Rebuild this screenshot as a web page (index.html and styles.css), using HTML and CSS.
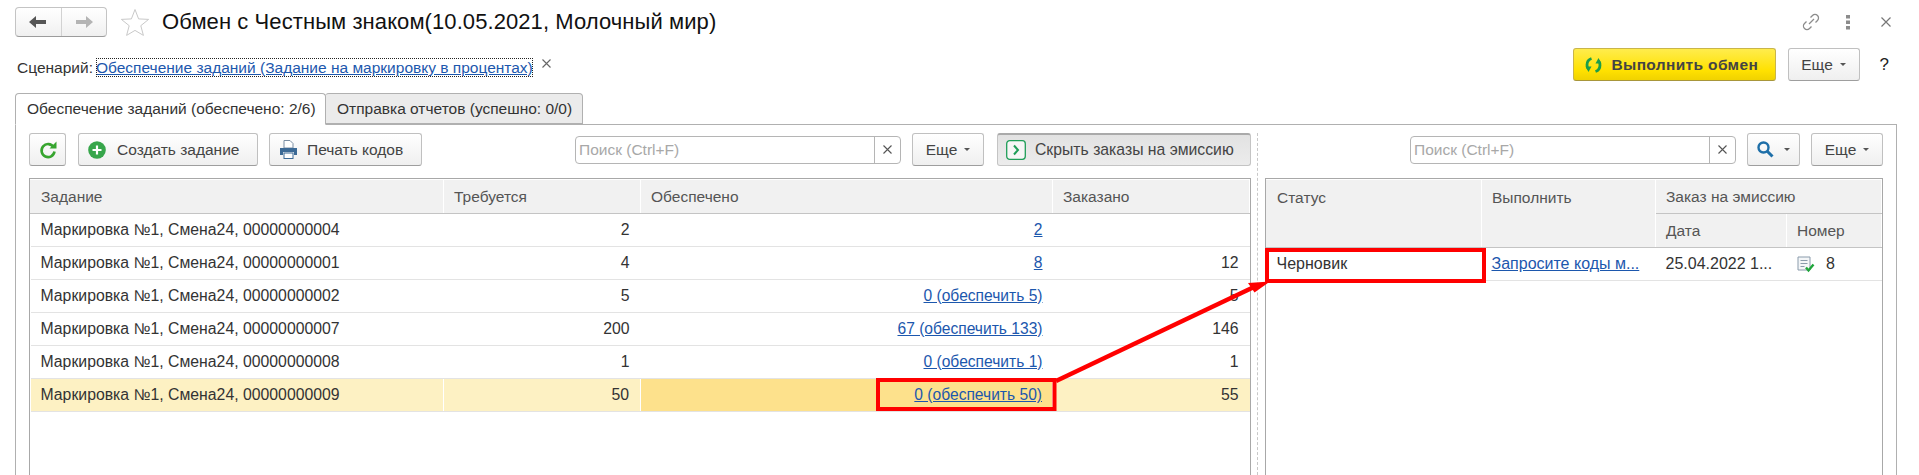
FILE: index.html
```html
<!DOCTYPE html>
<html lang="ru">

<head>
	<meta charset="UTF-8">
	<title>Обмен с Честным знаком</title>
	<link rel="stylesheet" href="styles.css">
</head>

<body>
	<div class="page">
		<div class="titlebar">
			<div class="nav">
				<span class="nav_item">
					<svg width="18" height="14" viewBox="0 0 18 14"><path d="M0 7 7 1v4h10v4H7v4z" fill="#555"/></svg>
				</span>
				<span class="nav_item">
					<svg width="18" height="14" viewBox="0 0 18 14"><path d="M18 7 11 1v4H1v4h10v4z" fill="#b4b4b4"/></svg>
				</span>
			</div>
			<svg class="star" width="30" height="28" viewBox="0 0 30 28"><path d="M15 1.5l3.6 9.4 10 .5-7.800 6.300 2.600 9.700L15 22.400l-8.400 5 2.600-9.700-7.800-6.300 10-.5z" fill="#fff" stroke="#c9c9c9"/></svg>
			<h1 class="title">Обмен с Честным знаком(10.05.2021, Молочный мир)</h1>
			<div class="window_icons">
				<svg class="icon_link" width="20" height="20" viewBox="0 0 20 20" fill="none" stroke="#8c8c8c" stroke-width="1.300"><path d="M8 12l5-5"/><path d="M9.500 5.500l2-2a3.500 3.500 0 0 1 5 5l-2 2"/><path d="M10.500 14.500l-2 2a3.500 3.500 0 0 1-5-5l2-2"/></svg>
				<svg width="6" height="16" viewBox="0 0 6 16" fill="#8c8c8c"><rect x="1" y="1" width="4" height="3.500"/><rect x="1" y="6.500" width="4" height="3.500"/><rect x="1" y="12" width="4" height="3.500"/></svg>
				<svg width="10" height="10" viewBox="0 0 10 10" stroke="#777" stroke-width="1.200"><path d="M.5.5l9 9M9.500.5l-9 9"/></svg>
			</div>
		</div>

		<div class="scenario">
			<span class="scenario_label">Сценарий:</span>
			<a class="scenario_link" href="#">Обеспечение заданий (Задание на маркировку в процентах)</a>
			<svg class="scenario_close" width="9" height="9" viewBox="0 0 9 9" stroke="#666" stroke-width="1.100"><path d="M.5.5l8 8M8.500.5l-8 8"/></svg>
			<div class="scenario_actions">
				<button class="btn btn_yellow">
					<svg width="17" height="18" viewBox="0 0 17 18" fill="none" stroke="#1b9e4b" stroke-width="2.800"><path d="M6.500 2.500C3.500 3.500 2 6 2 9c0 1.800.5 3 1.500 4"/><path d="M.5 10.500h6L3.500 16z" fill="#1b9e4b" stroke="none"/><path d="M10.500 15.500c3-1 4.500-3.500 4.500-6.500 0-1.800-.5-3-1.500-4"/><path d="M16.500 7.500h-6L13.500 2z" fill="#1b9e4b" stroke="none"/></svg>
					Выполнить обмен
				</button>
				<button class="btn btn_more">Еще <span class="caret"></span></button>
				<span class="help">?</span>
			</div>
		</div>

		<div class="tabs">
			<div class="tab tab_active">Обеспечение заданий (обеспечено: 2/6)</div>
			<div class="tab tab_second">Отправка отчетов (успешно: 0/0)</div>
		</div>

		<div class="panel">
			<div class="col_left">
				<div class="toolbar">
					<button class="btn btn_icon">
						<svg width="18" height="20" viewBox="0 0 18 20" fill="none"><path d="M14.500 7A6.500 6.500 0 1 0 15.500 11.500" stroke="#37a52f" stroke-width="2.600"/><path d="M10.500 8.500h7V1.500z" fill="#37a52f"/></svg>
					</button>
					<button class="btn btn_create">
						<svg width="18" height="18" viewBox="0 0 18 18"><circle cx="9" cy="9" r="8.800" fill="#37a64b"/><path d="M9 4.500v9M4.500 9h9" stroke="#fff" stroke-width="2.200"/></svg>
						Создать задание
					</button>
					<button class="btn btn_print">
						<svg width="19" height="19" viewBox="0 0 19 19"><path d="M5 .5h6l3 3V8H5z" fill="#fff" stroke="#7b8ea3"/><path d="M1 8h17v7h-3v-3H4v3H1z" fill="#3c6a96"/><rect x="5" y="13" width="9" height="5.500" fill="#fff" stroke="#3c6a96"/></svg>
						Печать кодов
					</button>
					<div class="search">
						<span class="search_hint">Поиск (Ctrl+F)</span>
						<span class="search_clear"><svg width="9" height="9" viewBox="0 0 9 9" stroke="#555" stroke-width="1.100"><path d="M.5.500l8 8M8.500.500l-8 8"/></svg></span>
					</div>
					<button class="btn btn_more">Еще <span class="caret"></span></button>
					<button class="btn btn_pressed">
						<svg width="20" height="20" viewBox="0 0 20 20" fill="none"><rect x=".7" y=".7" width="18.600" height="18.600" rx="3" fill="#f6f6f6" stroke="#1f9e58" stroke-width="1.300"/><path d="M8 5.500l4 4.500-4 4.500" stroke="#1f9e58" stroke-width="2"/></svg>
						Скрыть заказы на эмиссию
					</button>
				</div>

				<div class="grid">
					<table class="grid_table">
						<colgroup>
							<col class="col_task">
							<col class="col_need">
							<col class="col_ready">
							<col class="col_ordered">
						</colgroup>
						<thead>
							<tr>
								<th>Задание</th>
								<th>Требуется</th>
								<th>Обеспечено</th>
								<th>Заказано</th>
							</tr>
						</thead>
						<tbody>
							<tr>
								<td>Маркировка №1, Смена24, 00000000004</td>
								<td class="num">2</td>
								<td class="num"><a href="#">2</a></td>
								<td class="num"></td>
							</tr>
							<tr>
								<td>Маркировка №1, Смена24, 00000000001</td>
								<td class="num">4</td>
								<td class="num"><a href="#">8</a></td>
								<td class="num">12</td>
							</tr>
							<tr>
								<td>Маркировка №1, Смена24, 00000000002</td>
								<td class="num">5</td>
								<td class="num"><a href="#">0 (обеспечить 5)</a></td>
								<td class="num">5</td>
							</tr>
							<tr>
								<td>Маркировка №1, Смена24, 00000000007</td>
								<td class="num">200</td>
								<td class="num"><a href="#">67 (обеспечить 133)</a></td>
								<td class="num">146</td>
							</tr>
							<tr>
								<td>Маркировка №1, Смена24, 00000000008</td>
								<td class="num">1</td>
								<td class="num"><a href="#">0 (обеспечить 1)</a></td>
								<td class="num">1</td>
							</tr>
							<tr class="row_selected">
								<td>Маркировка №1, Смена24, 00000000009</td>
								<td class="num">50</td>
								<td class="num cell_current"><a href="#">0 (обеспечить 50)</a></td>
								<td class="num">55</td>
							</tr>
						</tbody>
					</table>
				</div>
			</div>

			<div class="splitter"></div>

			<div class="col_right">
				<div class="toolbar toolbar_right">
					<div class="search">
						<span class="search_hint">Поиск (Ctrl+F)</span>
						<span class="search_clear"><svg width="9" height="9" viewBox="0 0 9 9" stroke="#555" stroke-width="1.100"><path d="M.5.500l8 8M8.500.500l-8 8"/></svg></span>
					</div>
					<button class="btn btn_find">
						<svg width="17" height="17" viewBox="0 0 17 17" fill="none"><circle cx="6.500" cy="6.500" r="5" stroke="#1e6fa8" stroke-width="2.400"/><path d="M10 10l5.500 5.500" stroke="#1e6fa8" stroke-width="3"/></svg>
						<span class="caret"></span>
					</button>
					<button class="btn btn_more">Еще <span class="caret"></span></button>
				</div>

				<div class="grid">
					<table class="grid_table grid_table_right">
						<colgroup>
							<col class="col_status">
							<col class="col_run">
							<col class="col_date">
							<col class="col_number">
						</colgroup>
						<thead>
							<tr>
								<th rowspan="2" class="th_top">Статус</th>
								<th rowspan="2" class="th_top">Выполнить</th>
								<th colspan="2">Заказ на эмиссию</th>
							</tr>
							<tr>
								<th>Дата</th>
								<th>Номер</th>
							</tr>
						</thead>
						<tbody>
							<tr>
								<td>Черновик</td>
								<td class="cut"><a href="#">Запросите коды м...</a></td>
								<td>25.04.2022 1...</td>
								<td class="cell_doc">
									<svg width="19" height="17" viewBox="0 0 19 17"><path d="M1 1h12v13H1z" fill="#f4f6f8" stroke="#8a9bab"/><path d="M3.500 4.500h7M3.500 7.500h7M3.500 10.500h4" stroke="#8a9bab"/><path d="M9 11.500l2.500 3 5-6" fill="none" stroke="#1fa53a" stroke-width="2.400"/></svg>
									8
								</td>
							</tr>
						</tbody>
					</table>
				</div>
			</div>
		</div>

		<svg class="marks" width="1919" height="475" viewBox="0 0 1919 475" fill="none">
			<rect x="878" y="380" width="176.500" height="29" stroke="#f00" stroke-width="4"/>
			<rect x="1267" y="250" width="217" height="31" stroke="#f00" stroke-width="4"/>
			<path d="M1056 381 1254 287" stroke="#f00" stroke-width="4.500"/>
			<path d="M1270 281.500 1248 283 1254.500 292.500z" fill="#f00"/>
		</svg>
	</div>
</body>

</html>
```

FILE: styles.css
```css
* {
	box-sizing: border-box;
}

body {
	margin: 0;
	background-color: #fff;
	font-family: "Liberation Sans", Arial, sans-serif;
	font-size: 15.5px;
	color: #333;
}

.page {
	position: relative;
	width: 1919px;
	height: 475px;
	overflow: hidden;
	display: flex;
	flex-direction: column;
}

a {
	color: #1c57ad;
}

/* title row */
.titlebar {
	display: flex;
	align-items: center;
	height: 30px;
	margin-top: 7px;
	padding-left: 15px;
}

.nav {
	display: flex;
	width: 92px;
	height: 30px;
	border: 1px solid #c4c4c4;
	border-bottom-color: #9c9c9c;
	border-radius: 4px;
	background: linear-gradient(#fff, #f0f0f0);
}

.nav_item {
	flex: 1;
	display: flex;
	align-items: center;
	justify-content: center;
}

.nav_item + .nav_item {
	border-left: 1px solid #d2d2d2;
}

.star {
	margin-left: 13px;
}

.title {
	margin: 0 0 0 12px;
	font-size: 22px;
	font-weight: normal;
	letter-spacing: .08px;
	color: #111;
}

.window_icons {
	display: flex;
	align-items: center;
	margin-left: auto;
	padding-right: 28px;
	gap: 30px;
}

.icon_link {
	margin-right: -6px;
}

/* scenario row */
.scenario {
	display: flex;
	align-items: center;
	height: 33px;
	margin-top: 11px;
	padding-left: 17px;
}

.scenario_label {
	margin: 6px 3px 0 0;
}

.scenario_link {
	margin-top: 6px;
	padding: 1px 0;
	outline: 1px dotted #222;
	outline-offset: -1px;
	line-height: 17px;
}

.scenario_close {
	margin: -3px 0 0 9px;
}

.scenario_actions {
	display: flex;
	align-items: center;
	margin-left: auto;
	padding-right: 30px;
}

.help {
	margin-left: 20px;
	font-size: 17px;
	color: #222;
}

/* buttons */
.btn {
	display: flex;
	align-items: center;
	justify-content: center;
	height: 33px;
	padding: 0;
	border: 1px solid #c0c0c0;
	border-bottom-color: #9e9e9e;
	border-radius: 3px;
	background: linear-gradient(#fff, #efefef);
	font-family: inherit;
	font-size: 15.5px;
	color: #444;
}

.btn_icon {
	width: 37px;
}

.btn_create {
	width: 180px;
	margin-left: 1px;
	justify-content: flex-start;
	padding-left: 9px;
	gap: 11px;
}

.btn_print {
	width: 153px;
	justify-content: flex-start;
	padding-left: 9px;
	gap: 9px;
}

.btn_more {
	width: 72px;
	gap: 7px;
}

.btn_find {
	width: 53px;
	gap: 10px;
}

.btn_pressed {
	width: 254px;
	justify-content: flex-start;
	padding-left: 8px;
	gap: 9px;
	border-color: #c4c4c4;
	border-top: 2px solid #aaa;
	background: linear-gradient(#e2e2e2, #ececec);
	font-size: 15.750px;
}

.btn_yellow {
	width: 203px;
	justify-content: flex-start;
	padding-left: 11px;
	gap: 10px;
	border-color: #c9b54a;
	border-bottom-color: #a8963a;
	background: linear-gradient(#ffec4d, #ffe100 70%, #f0d200);
	font-size: 15.5px;
	font-weight: bold;
	letter-spacing: .35px;
	color: #444;
}

.scenario_actions .btn_more {
	margin-left: 12px;
}

.caret {
	width: 0;
	height: 0;
	border-left: 3px solid transparent;
	border-right: 3px solid transparent;
	border-top: 3px solid #555;
}

/* tabs */
.tabs {
	display: flex;
	height: 32px;
	margin: 12px 0 -1px 15px;
}

.tab {
	display: flex;
	align-items: center;
	border: 1px solid #b0b0b0;
	border-radius: 4px 4px 0 0;
}

.tab_active {
	position: relative;
	z-index: 1;
	width: 311px;
	padding-left: 11px;
	border-bottom-color: #fff;
	background-color: #fff;
}

.tab_second {
	width: 258px;
	height: 31px;
	margin-left: -1px;
	padding-left: 12px;
	border-left: none;
	background-color: #ebebeb;
}

/* panel with the two lists */
.panel {
	flex: 1;
	display: flex;
	width: 1882px;
	min-height: 0;
	margin-left: 15px;
	padding: 8px 13px 0;
	border: 1px solid #b0b0b0;
	border-bottom: none;
}

.col_left {
	display: flex;
	flex-direction: column;
	width: 1222px;
}

.col_right {
	display: flex;
	flex-direction: column;
	width: 618px;
}

.splitter {
	width: 1px;
	margin: 0 7px 0 6px;
	border-left: 1px dashed #c8c8c8;
}

.toolbar {
	display: flex;
	align-items: center;
	gap: 11px;
	height: 33px;
	margin-bottom: 12px;
}

.toolbar_right {
	justify-content: flex-end;
}

.search {
	display: flex;
	width: 326px;
	height: 28px;
	border: 1px solid #b5b5b5;
	border-radius: 4px;
	background-color: #fff;
}

.col_left .search {
	margin-left: auto;
}

.col_left .btn_pressed {
	margin-left: 2px;
}

.search_hint {
	flex: 1;
	padding-left: 3px;
	line-height: 26px;
	color: #a8a8a8;
}

.search_clear {
	display: flex;
	align-items: center;
	justify-content: center;
	width: 26px;
	border-left: 1px solid #b5b5b5;
}

/* tables */
.grid {
	flex: 1;
	border: 1px solid #a8a8a8;
	border-bottom: none;
}

.grid_table {
	width: 100%;
	border-collapse: collapse;
	table-layout: fixed;
}

.col_task {
	width: 413px;
}

.col_need {
	width: 197px;
}

.col_ready {
	width: 412px;
}

.col_status {
	width: 215px;
}

.col_run {
	width: 174px;
}

.col_date {
	width: 131px;
}

.grid_table th {
	height: 34px;
	padding: 0 10px;
	border: 1px solid #fff;
	border-left: 1px solid #d0d0d0;
	border-bottom: 1px solid #c4c4c4;
	background-color: #f1f1f1;
	font-weight: normal;
	text-align: left;
	color: #555;
}

.grid_table th:first-child {
	border-left-color: #f1f1f1;
}

.grid_table th.th_top {
	padding-top: 9px;
	vertical-align: top;
}

.grid_table td {
	height: 33px;
	padding: 0 10px;
	border-bottom: 1px solid #e3e3e3;
	font-size: 15.8px;
	white-space: nowrap;
	overflow: hidden;
}

.grid_table td.num {
	padding-right: 11px;
	text-align: right;
}

.grid_table td.num a {
	margin-right: -1px;
	font-size: 15.6px;
}

.grid_table_right td {
	font-size: 16px;
}

.row_selected td {
	background-color: #fdf1c3;
	border-left: 1px solid #fff;
}

.row_selected td:first-child {
	border-left: none;
}

.row_selected td.cell_current {
	background-color: #fde18c;
}

.cell_doc svg {
	margin: 0 6px -4px 0;
}

/* red marks drawn on top of the screenshot */
.marks {
	position: absolute;
	top: 0;
	left: 0;
	pointer-events: none;
}
```
